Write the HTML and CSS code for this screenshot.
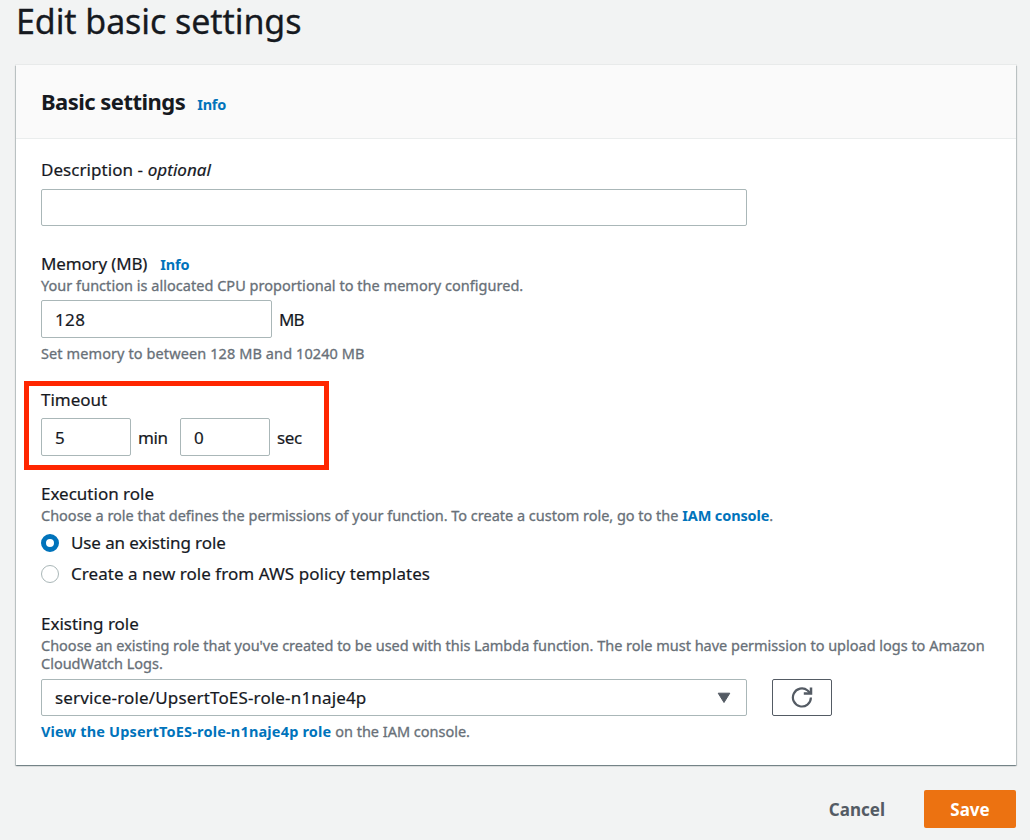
FILE: index.html
```html
<!DOCTYPE html>
<html lang="en">
<head>
<meta charset="utf-8">
<title>Edit basic settings</title>
<link rel="stylesheet" href="styles.css">
</head>
<body>
<main class="page">
  <h1 class="page-title">Edit basic settings</h1>
  <section class="card">
    <header class="card-header">
      <h2 class="card-title">Basic settings</h2>
      <a class="info">Info</a>
    </header>
    <div class="card-body">
      <div class="field description">
        <label class="label">Description - <em>optional</em></label>
        <div class="input wide"></div>
      </div>
      <div class="field memory">
        <div class="label-row"><label class="label">Memory (MB)</label><a class="info">Info</a></div>
        <p class="hint">Your function is allocated CPU proportional to the memory configured.</p>
        <div class="input-row"><div class="input medium">128</div><span class="unit megabytes">MB</span></div>
        <p class="hint below range">Set memory to between 128 MB and 10240 MB</p>
      </div>
      <div class="field timeout">
        <label class="label">Timeout</label>
        <div class="input-row"><div class="input small">5</div><span class="unit minutes">min</span><div class="input small">0</div><span class="unit seconds">sec</span></div>
        <div class="highlight"></div>
      </div>
      <div class="field execution">
        <label class="label">Execution role</label>
        <p class="hint">Choose a role that defines the permissions of your function. To create a custom role, go to the <a class="link">IAM console</a>.</p>
        <div class="radio-list">
          <label class="radio"><span class="dot checked"></span><span class="choice">Use an existing role</span></label>
          <label class="radio"><span class="dot"></span><span class="choice long">Create a new role from AWS policy templates</span></label>
        </div>
      </div>
      <div class="field existing">
        <label class="label">Existing role</label>
        <p class="hint">Choose an existing role that you've created to be used with this Lambda function. The role must have permission to upload logs to Amazon<br>CloudWatch Logs.</p>
        <div class="select-row">
          <div class="input wide select"><span class="value">service-role/UpsertToES-role-n1naje4p</span>
            <svg class="caret" width="14" height="12" viewBox="0 0 14 12"><path d="M1.200 1.200h11.600L7 10.500z" fill="#545b64" stroke="#545b64" stroke-linejoin="round"/></svg>
          </div>
          <button class="refresh" aria-label="Refresh"><svg width="22" height="22" viewBox="0 0 22 22" fill="none" stroke="#545b64" stroke-width="2.200"><path d="M19.900 10.500a9 9 0 1 1-3.300-7l2.400 2.400"/><path d="M20 .4v6.200h-7.200" stroke-width="2.500"/></svg></button>
        </div>
        <p class="hint below view"><a class="link">View the UpsertToES-role-n1naje4p role</a> on the IAM console.</p>
      </div>
    </div>
  </section>
  <footer class="actions"><button class="cancel">Cancel</button><button class="save">Save</button></footer>
</main>
</body>
</html>
```
FILE: styles.css
```css
* { box-sizing: border-box; }
body { margin: 0; background: #f2f3f3; color: #16191f; font-family: "Noto Sans", "Open Sans", sans-serif; font-size: 17px; line-height: 22px; }
h1, h2, p { margin: 0; }
.page { width: 1030px; height: 840px; padding: 0 14px 0 16px; }
.page-title { height: 65px; font-size: 34px; font-weight: 400; line-height: 42px; letter-spacing: -0.08px; -webkit-text-stroke: 0.3px; }
.card { height: 700px; background: #fff; box-shadow: 0 1px 1px rgba(0,28,36,.3), 1px 1px 1px rgba(0,28,36,.15), -1px 1px 1px rgba(0,28,36,.15), 0 0 0 1px rgba(0,28,36,.04); }
.card-header { display: flex; align-items: baseline; gap: 12px; height: 74px; padding: 21px 25px 0; background: #fafafa; border-bottom: 1px solid #eaeded; }
.card-title { font-size: 22px; font-weight: 700; line-height: 30px; letter-spacing: -0.53px; }
.card-body { display: flex; flex-direction: column; padding: 20px 25px 0; }
.label { display: block; height: 22px; font-weight: 400; -webkit-text-stroke: 0.2px; }
.label-row, .input-row, .select-row { display: flex; align-items: center; }
.label-row { align-items: baseline; gap: 13px; height: 22px; margin-top: -1px; }
.label-row .label { letter-spacing: -0.15px; }
.info { color: #0073bb; font-size: 14.5px; font-weight: 700; letter-spacing: -0.2px; }
.link { color: #0073bb; font-weight: 700; -webkit-text-stroke: 0; }
.hint { color: #687078; font-size: 14.5px; line-height: 18px; white-space: nowrap; -webkit-text-stroke: 0.3px; }
.input { display: flex; align-items: center; height: 38px; padding: 1px 13px 0; background: #fff; border: 1px solid #aab7b8; border-radius: 2px; -webkit-text-stroke: 0.2px; }
.wide { width: 706px; height: 37px; }
.medium { width: 231px; letter-spacing: 0.4px; }
.small { width: 90px; }
.unit { position: relative; top: 1px; margin-left: 7px; -webkit-text-stroke: 0.2px; }
.megabytes { letter-spacing: -0.8px; }
.minutes { width: 30px; margin-right: 12px; letter-spacing: -0.4px; }
.seconds { letter-spacing: -0.4px; }
.description { height: 95px; }
.description .label { letter-spacing: 0.06px; }
.description .input { margin-top: 8px; }
.memory { height: 135px; }
.memory .label-row + .hint { margin-top: 1px; letter-spacing: 0.03px; }
.memory .input-row { margin-top: 6px; }
.below { margin-top: 6px; }
.range { letter-spacing: 0.1px; }
.timeout { position: relative; height: 94px; }
.timeout .input-row { margin-top: 7px; }
.highlight { position: absolute; left: -17px; top: -8px; width: 305px; height: 89px; border: 5px solid #ff2600; }
.execution { height: 130px; }
.execution .hint, .existing .label + .hint { margin-top: 1px; }
.execution .hint { letter-spacing: -0.01px; }
.execution .link { letter-spacing: -0.12px; }
.existing .hint { letter-spacing: -0.01px; }
.radio-list { display: flex; flex-direction: column; gap: 9px; margin-top: 8px; }
.radio { display: flex; align-items: center; gap: 12px; height: 22px; }
.choice { letter-spacing: -0.1px; -webkit-text-stroke: 0.2px; }
.long { letter-spacing: 0.045px; }
.dot { width: 18px; height: 18px; border: 1px solid #aab7b8; border-radius: 50%; background: #fff; }
.checked { border: 5px solid #0073bb; }
.select-row { gap: 25px; margin-top: 7px; }
.select { justify-content: space-between; padding: 0 15px 0 13px; }
.value { letter-spacing: 0.155px; }
.view .link { letter-spacing: 0.18px; }
.refresh { display: flex; align-items: center; justify-content: center; width: 60px; height: 37px; padding: 0; background: #fff; border: 1px solid #545b64; border-radius: 2px; }
.actions { display: flex; justify-content: flex-end; align-items: center; gap: 39px; height: 38px; margin-top: 25px; }
.cancel, .save { padding: 2px 0 0; border: 0; background: none; color: #545b64; font: inherit; font-weight: 700; }
.save { width: 92px; height: 38px; border-radius: 2px; background: #ec7211; color: #fff; }
```
